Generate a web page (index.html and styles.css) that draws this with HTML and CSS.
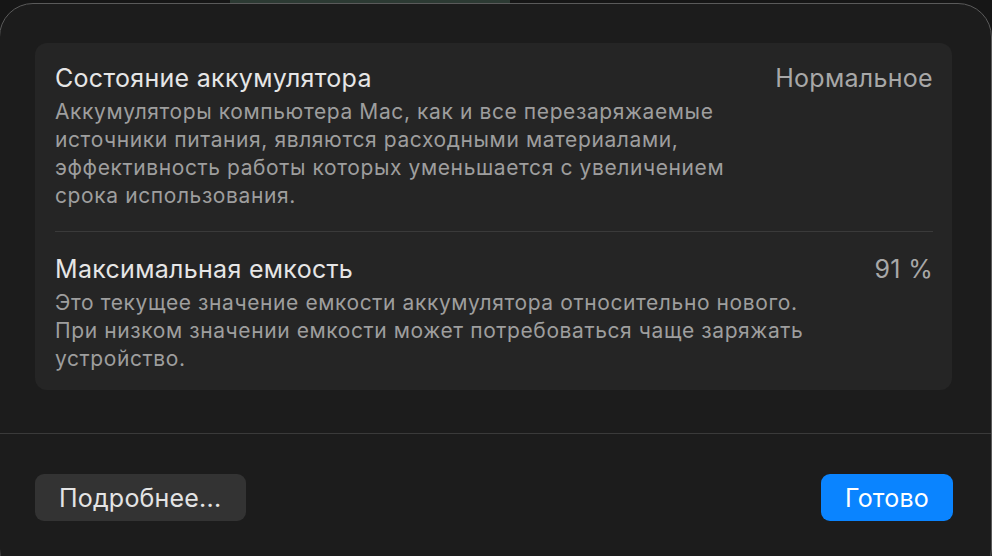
FILE: index.html
```html
<!DOCTYPE html>
<html lang="ru">
<head>
<meta charset="UTF-8">
<meta name="viewport" content="width=device-width, initial-scale=1.0">
<title>Состояние аккумулятора</title>
<link rel="stylesheet" href="styles.css">
</head>
<body>

<div class="backdrop-strip"></div>

<div class="window">
    <div class="card">
        <div class="row">
            <div class="row-text">
                <div class="row-title">Состояние аккумулятора</div>
                <div class="row-desc">Аккумуляторы компьютера Mac, как и все перезаряжаемые<br>источники питания, являются расходными материалами,<br>эффективность работы которых уменьшается с увеличением<br>срока использования.</div>
            </div>
            <div class="row-value">Нормальное</div>
        </div>
        <div class="row row-second">
            <div class="row-text">
                <div class="row-title">Максимальная емкость</div>
                <div class="row-desc">Это текущее значение емкости аккумулятора относительно нового.<br>При низком значении емкости может потребоваться чаще заряжать<br>устройство.</div>
            </div>
            <div class="row-value">91 %</div>
        </div>
    </div>

    <div class="footer">
        <button class="btn">Подробнее...</button>
        <button class="btn btn-primary">Готово</button>
    </div>
</div>

</body>
</html>
```

FILE: styles.css
```css
body {
    margin: 0;
    background-color: #161616;
    font-family: Inter, "Noto Sans", sans-serif;
    overflow: hidden;
    height: 556px;
}

.backdrop-strip {
    position: absolute;
    top: 0;
    left: 230px;
    width: 280px;
    height: 3px;
    background-color: #2c3a33;
}

.window {
    box-sizing: border-box;
    margin-top: 3px;
    margin-left: -1px;
    width: 993px;
    height: 580px;
    border: 1px solid #5a5a5a;
    border-radius: 34px;
    background-color: #1c1c1c;
    padding-top: 39px;
}

.card {
    box-sizing: border-box;
    margin-left: 35px;
    width: 917px;
    height: 347px;
    background-color: #252525;
    border-radius: 12px;
    padding: 0 19px 0 20px;
}

.row {
    display: flex;
    justify-content: space-between;
    align-items: flex-start;
    padding: 20px 0 21px;
}

.row-second {
    border-top: 1px solid #3a3a3a;
    padding-top: 22px;
}

.row-title {
    font-size: 25px;
    line-height: 30px;
    color: #e6e6e6;
    letter-spacing: 0.3px;
}

.row-desc {
    font-size: 21px;
    line-height: 28px;
    color: #9e9e9e;
    letter-spacing: 0.6px;
    margin-top: 5px;
}

.row-value {
    font-size: 25px;
    line-height: 30px;
    color: #a8a8a8;
    letter-spacing: 0.3px;
}

.footer {
    border-top: 1px solid #3a3a3a;
    margin-top: 43px;
    display: flex;
    justify-content: space-between;
    padding: 40px 38px 0 35px;
}

.btn {
    box-sizing: border-box;
    height: 47px;
    padding: 0 24px;
    border: none;
    border-radius: 9px;
    background-color: #333333;
    color: #e4e4e4;
    font-family: Inter, "Noto Sans", sans-serif;
    font-size: 25px;
    letter-spacing: 0.2px;
    min-width: 211px;
    text-align: left;
}

.btn-primary {
    min-width: 132px;
    text-align: center;
    background-color: #0a84ff;
    color: #ffffff;
}
```
